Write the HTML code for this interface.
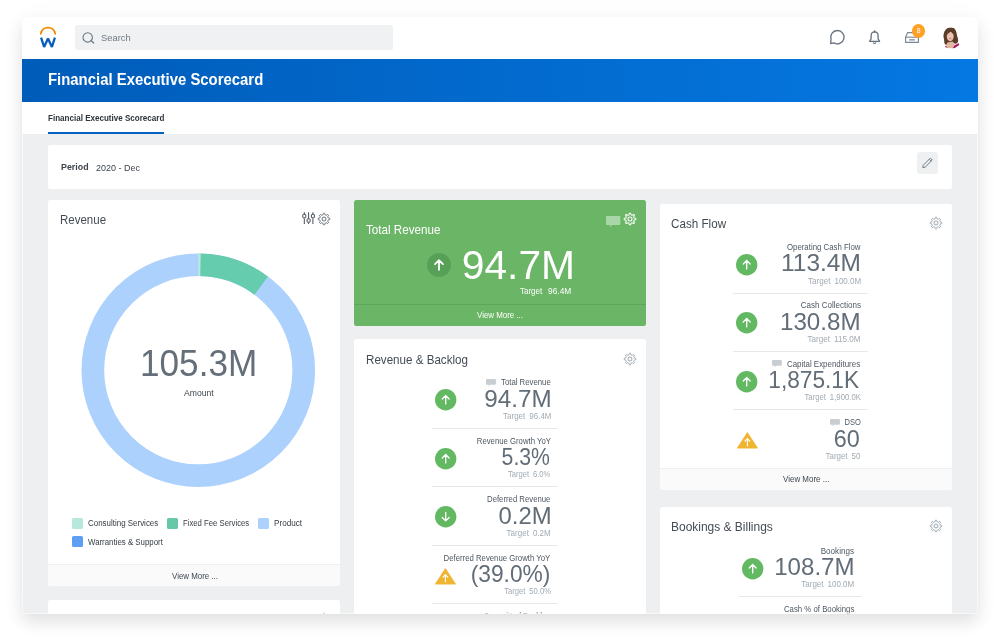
<!DOCTYPE html>
<html lang="en">
<head>
<meta charset="utf-8">
<title>Financial Executive Scorecard</title>
<style>
html,body{margin:0;padding:0;background:#fff;}
body{width:1000px;height:642px;position:relative;overflow:hidden;font-family:"Liberation Sans",sans-serif;}
#shadow{position:absolute;left:22.2px;top:17px;width:955.6px;height:596.7px;border-radius:4px;background:#edeff0;box-shadow:0 8px 16px rgba(0,0,0,.10),0 3px 30px rgba(0,0,0,.035);}
#win{position:absolute;left:22.2px;top:17px;width:955.6px;height:596.7px;border-radius:4px;overflow:hidden;background:#edeff0;}
#page{position:absolute;left:-22.2px;top:-17px;width:1000px;height:642px;will-change:transform;}
.t{position:absolute;margin:0;padding:0;white-space:nowrap;line-height:normal;font-weight:400;display:block;}
.ic{position:absolute;display:block;overflow:visible;}
#topbar{position:absolute;left:0;top:0;width:1000px;height:58.6px;background:#fff;}
#search{position:absolute;left:75.2px;top:24.5px;width:318.2px;height:25.8px;border-radius:2.5px;background:#f0f1f3;}
#search .ic, #search .t{margin-left:-75.2px;margin-top:-24.5px;}
#badge{position:absolute;left:911.8px;top:24px;width:13.6px;height:13.6px;border-radius:50%;background:#ffa126;}
#hero{position:absolute;left:0;top:58.6px;width:1000px;height:43.6px;background:linear-gradient(90deg,#005cb9 2.2%,#0578e2 97.8%);}
#hero .t{margin-top:-58.6px;}
#tabs{position:absolute;left:0;top:102.2px;width:1000px;height:32.2px;background:#fff;}
#tabs .t{margin-top:-102.2px;}
#tabline{position:absolute;left:48px;top:29.4px;width:116px;height:2.9px;background:#0560c2;}
.card{position:absolute;background:#fff;border-radius:2.5px;overflow:hidden;margin:0;}
.card.green{background:#6bb566;}
.foot{position:absolute;left:0;width:100%;background:#fafafa;border-top:1px solid #efefef;box-sizing:border-box;}
.gline{position:absolute;left:0;width:100%;height:1px;background:#5da75b;}
.hr{position:absolute;height:1px;background:#e6e9ec;}
.sw{position:absolute;width:11px;height:10.8px;border-radius:1.6px;display:block;}
#edit{position:absolute;left:917.4px;top:152.4px;width:21px;height:21.2px;border-radius:3px;background:#eff0f2;}
#edit svg{display:block;}
.row{margin:0;}
.in{position:absolute;width:1000px;height:642px;}
#edge{position:absolute;left:0;top:117.4px;width:955.6px;height:479.3px;box-sizing:border-box;border:1px solid rgba(255,255,255,.55);border-top:0;border-radius:0 0 4px 4px;pointer-events:none;}
</style>
</head>
<body>
<div id="shadow"></div>
<div id="win"><div id="page">
<header id="topbar">
<svg class="ic" id="logo" style="left:38px;top:24px" width="20" height="26" viewBox="0 0 20 26"><path d="M2.8 9.7A7.3 7.3 0 0 1 17.2 9.7" fill="none" stroke="#f38b00" stroke-width="1.9" stroke-linecap="round"/><path d="M3.1 13.7L6.1 23L10 14.5L13.9 23L16.9 13.7" fill="none" stroke="#0a5cbc" stroke-width="2.3" stroke-linejoin="bevel"/></svg>
<div id="search">
<svg class="ic" style="left:80.5px;top:30.5px" width="16" height="16" viewBox="0 0 16 16"><circle cx="6.7" cy="6.4" r="4.7" fill="none" stroke="#6b7782" stroke-width="1.1"/><path d="M10.2 9.8L12.7 12" stroke="#6b7782" stroke-width="1.2" stroke-linecap="round"/></svg>
<span class="t" style="font-size:9.5px;top:31.90px;color:#6f7a85;left:100.98px;transform-origin:0 0;transform:scaleX(0.9854);">Search</span>
</div>
<svg class="ic" style="left:828px;top:28.4px" width="18" height="18" viewBox="0 0 18 18"><path d="M5.9 14.9A6.7 6.7 0 1 0 3 11.2L2.7 15.6Z" fill="none" stroke="#66737f" stroke-width="1.35" stroke-linejoin="round"/></svg>
<svg class="ic" style="left:866px;top:28px" width="18" height="18" viewBox="0 0 18 18"><path d="M8.6 3.9C6.2 4 5.1 5.8 5.1 7.8V10.8L3.6 13.3H13.6L12.1 10.8V7.8C12.1 5.8 11 4 8.6 3.9Z" fill="none" stroke="#66737f" stroke-width="1.3" stroke-linejoin="round"/><path d="M7.3 14.4A1.35 1.5 0 0 0 9.9 14.4" fill="none" stroke="#66737f" stroke-width="1.1"/><path d="M8.6 3V3.8" stroke="#66737f" stroke-width="1.5" stroke-linecap="round"/></svg>
<svg class="ic" style="left:903px;top:29px" width="18" height="16" viewBox="0 0 18 16"><path d="M2.6 13.4V8.2L4.6 3.6H13.6L15.4 8.2V13.4Z" fill="none" stroke="#7a8691" stroke-width="1.15" stroke-linejoin="round"/><path d="M2.6 8.2H15.4" stroke="#7a8691" stroke-width="1.1"/><path d="M6.6 10.8H11.4" stroke="#7a8691" stroke-width="1.3" stroke-linecap="round"/></svg>
<div id="badge"></div>
<span class="t" style="font-size:7px;top:27.40px;color:#fff;left:916.64px;transform-origin:1.96px 0;">8</span>
<svg class="ic" id="avatar" style="left:940.4px;top:26.6px" width="22" height="22" viewBox="0 0 22 22"><defs><clipPath id="av"><circle cx="11" cy="11" r="10.6"/></clipPath></defs><g clip-path="url(#av)"><rect width="22" height="22" fill="#fff"/><path d="M5.2 17.6C3.6 15.4 4.6 12.6 3.6 10.4C3 7.4 4.4 3.4 6.8 1.6C9 -0.2 12.6 -0.2 14.6 1.8C16.6 3.8 16.6 7 17.2 9.2C18 11.4 18.6 13.4 17.6 15.6C16.6 17.2 14.6 17 13.6 16L7.6 16.4C7 17.4 6 18 5.2 17.6Z" fill="#5a3c29"/><path d="M7.4 15.4L12.9 14.4L14.6 17.4L12.6 21.6H8.2L5.6 20.2Z" fill="#e3b7a0"/><ellipse cx="10.2" cy="9.2" rx="3.45" ry="5.1" fill="#ecc3ad"/><path d="M6.9 8.6C6.9 5.2 8.4 3.6 10.4 3.6C12.4 3.6 13.7 5 13.8 7.6C12.6 6.6 11.6 5.4 10.6 4.8C9.2 5.6 7.6 6.8 6.9 8.6Z" fill="#5a3c29"/><path d="M8.9 11.6H11.6" stroke="#c9707a" stroke-width="0.7"/><path d="M12.4 22L14.2 18.4L18.6 16.2C19.6 17 20.2 18.4 20.2 19.6L15.6 22Z" fill="#a31b5e"/><path d="M4.6 19.4L6 18.8L8 21.8L6.4 21.4Z" fill="#a31b5e"/></g></svg>
</header>
<div id="hero">
<h1 class="t" style="font-size:16px;top:71.40px;color:#fff;font-weight:700;left:47.73px;transform-origin:0 0;transform:scaleX(0.9310);">Financial Executive Scorecard</h1>
</div>
<nav id="tabs">
<span class="t" style="font-size:9.5px;top:111.60px;color:#2c333a;font-weight:700;left:47.68px;transform-origin:0 0;transform:scaleX(0.8475);">Financial Executive Scorecard</span>
<div id="tabline"></div>
</nav>
<main id="main">
<section class="card" aria-label="Prompt" style="left:48px;top:145.2px;width:903.8px;height:43.6px"><div class="in" style="left:-48px;top:-145.2px">
<span class="t" style="font-size:9.25px;top:162.20px;color:#3c444c;font-weight:700;left:61.02px;transform-origin:0 0;transform:scaleX(0.9577);">Period</span>
<span class="t" style="font-size:9.5px;top:162.00px;color:#3c444c;left:96.35px;transform-origin:0 0;transform:scaleX(0.9444);">2020 - Dec</span>
<div id="edit"><svg width="21" height="21" viewBox="0 0 21 21"><path d="M6.2 13.3L13.4 6.1L15.3 8L8.1 15.2L5.8 15.6ZM12.2 7.3L14.1 9.2" fill="none" stroke="#6f7b86" stroke-width="1" stroke-linejoin="round"/></svg></div>
</div></section>
<section class="card" aria-label="Revenue" style="left:48px;top:199.8px;width:292.2px;height:386px"><div class="foot" style="top:364.4px;height:21.6px"></div><div class="in" style="left:-48px;top:-199.8px">
<h2 class="t" style="font-size:12.75px;top:211.80px;color:#434b54;left:59.68px;transform-origin:0 0;transform:scaleX(0.9027);">Revenue</h2>
<svg class="ic" style="left:301px;top:211px" width="16" height="15" viewBox="0 0 16 15"><g fill="none" stroke="#474e56" stroke-width="1"><path d="M3.3 1.2V3M3.3 7.4V13M7.6 1.2V7.4M7.6 11.6V13M11.9 1.2V3M11.9 7.4V13"/><rect x="1.8" y="3.4" width="3" height="3.4" rx="0.5"/><rect x="6.1" y="7.8" width="3" height="3.4" rx="0.5"/><rect x="10.4" y="3.4" width="3" height="3.4" rx="0.5"/></g></svg>
<svg class="ic" style="left:316.30px;top:210.80px" width="16" height="16" viewBox="0 0 16 16"><path d="M8.00 2.17 L8.38 2.20 L8.73 2.43 L8.92 3.37 L9.10 3.89 L9.35 4.02 L9.61 4.12 L9.86 4.23 L10.13 4.32 L10.62 4.08 L11.42 3.54 L11.83 3.63 L12.12 3.88 L12.37 4.17 L12.46 4.58 L11.92 5.38 L11.68 5.87 L11.77 6.14 L11.88 6.39 L11.98 6.65 L12.11 6.90 L12.63 7.08 L13.57 7.27 L13.80 7.62 L13.83 8.00 L13.80 8.38 L13.57 8.73 L12.63 8.92 L12.11 9.10 L11.98 9.35 L11.88 9.61 L11.77 9.86 L11.68 10.13 L11.92 10.62 L12.46 11.42 L12.37 11.83 L12.12 12.12 L11.83 12.37 L11.42 12.46 L10.62 11.92 L10.13 11.68 L9.86 11.77 L9.61 11.88 L9.35 11.98 L9.10 12.11 L8.92 12.63 L8.73 13.57 L8.38 13.80 L8.00 13.83 L7.62 13.80 L7.27 13.57 L7.08 12.63 L6.90 12.11 L6.65 11.98 L6.39 11.88 L6.14 11.77 L5.87 11.68 L5.38 11.92 L4.58 12.46 L4.17 12.37 L3.88 12.12 L3.63 11.83 L3.54 11.42 L4.08 10.62 L4.32 10.13 L4.23 9.86 L4.12 9.61 L4.02 9.35 L3.89 9.10 L3.37 8.92 L2.43 8.73 L2.20 8.38 L2.17 8.00 L2.20 7.62 L2.43 7.27 L3.37 7.08 L3.89 6.90 L4.02 6.65 L4.12 6.39 L4.23 6.14 L4.32 5.87 L4.08 5.38 L3.54 4.58 L3.63 4.17 L3.88 3.88 L4.17 3.63 L4.58 3.54 L5.38 4.08 L5.87 4.32 L6.14 4.23 L6.39 4.12 L6.65 4.02 L6.90 3.89 L7.08 3.37 L7.27 2.43 L7.62 2.20Z" fill="none" stroke="#555c64" stroke-width="0.9" stroke-linejoin="round"/><circle cx="8" cy="8" r="2.0" fill="none" stroke="#555c64" stroke-width="0.9"/></svg>
<svg class="ic" style="left:0;top:0" width="1000" height="642" viewBox="0 0 1000 642"><circle cx="198.3" cy="370.2" r="105.45" fill="none" stroke="#acd1fd" stroke-width="22.70"/><path d="M198.30 264.75A105.45 105.45 0 0 1 200.69 264.78" fill="none" stroke="#b9ead9" stroke-width="22.70"/><path d="M200.51 264.77A105.45 105.45 0 0 1 261.17 285.54" fill="none" stroke="#65ccad" stroke-width="22.70"/></svg>
<span class="t big" style="font-size:36.25px;top:342.60px;color:#646f7a;left:139.96px;transform-origin:0 0;transform:scaleX(0.9699);">105.3M</span>
<span class="t" style="font-size:8.25px;top:389.30px;color:#3f474f;left:183.60px;transform-origin:0 0;transform:scaleX(1.0430);">Amount</span>
<i class="sw" style="left:71.8px;top:517.8px;background:#b6e9db"></i>
<span class="t" style="font-size:8.5px;top:518.00px;color:#353c44;left:87.90px;transform-origin:0 0;transform:scaleX(0.9353);">Consulting Services</span>
<i class="sw" style="left:167.4px;top:517.8px;background:#65c8a7"></i>
<span class="t" style="font-size:8.5px;top:518.00px;color:#353c44;left:182.98px;transform-origin:0 0;transform:scaleX(0.9097);">Fixed Fee Services</span>
<i class="sw" style="left:258.1px;top:517.8px;background:#acd1fd"></i>
<span class="t" style="font-size:8.5px;top:518.00px;color:#353c44;left:273.65px;transform-origin:0 0;transform:scaleX(0.9594);">Product</span>
<i class="sw" style="left:71.8px;top:536.4px;background:#5f9ff3"></i>
<span class="t" style="font-size:8.5px;top:536.80px;color:#353c44;left:88.26px;transform-origin:0 0;transform:scaleX(0.9253);">Warranties &amp; Support</span>
<span class="t" style="font-size:8.75px;top:570.80px;color:#3f474f;left:171.86px;transform-origin:0 0;transform:scaleX(0.9031);">View More ...</span>
</div></section>
<section class="card" aria-label="" style="left:48px;top:599.6px;width:292.2px;height:60px"><div class="in" style="left:-48px;top:-599.6px">
<svg class="ic" style="left:316.40px;top:610.60px" width="16" height="16" viewBox="0 0 16 16"><path d="M8.00 2.17 L8.38 2.20 L8.73 2.43 L8.92 3.37 L9.10 3.89 L9.35 4.02 L9.61 4.12 L9.86 4.23 L10.13 4.32 L10.62 4.08 L11.42 3.54 L11.83 3.63 L12.12 3.88 L12.37 4.17 L12.46 4.58 L11.92 5.38 L11.68 5.87 L11.77 6.14 L11.88 6.39 L11.98 6.65 L12.11 6.90 L12.63 7.08 L13.57 7.27 L13.80 7.62 L13.83 8.00 L13.80 8.38 L13.57 8.73 L12.63 8.92 L12.11 9.10 L11.98 9.35 L11.88 9.61 L11.77 9.86 L11.68 10.13 L11.92 10.62 L12.46 11.42 L12.37 11.83 L12.12 12.12 L11.83 12.37 L11.42 12.46 L10.62 11.92 L10.13 11.68 L9.86 11.77 L9.61 11.88 L9.35 11.98 L9.10 12.11 L8.92 12.63 L8.73 13.57 L8.38 13.80 L8.00 13.83 L7.62 13.80 L7.27 13.57 L7.08 12.63 L6.90 12.11 L6.65 11.98 L6.39 11.88 L6.14 11.77 L5.87 11.68 L5.38 11.92 L4.58 12.46 L4.17 12.37 L3.88 12.12 L3.63 11.83 L3.54 11.42 L4.08 10.62 L4.32 10.13 L4.23 9.86 L4.12 9.61 L4.02 9.35 L3.89 9.10 L3.37 8.92 L2.43 8.73 L2.20 8.38 L2.17 8.00 L2.20 7.62 L2.43 7.27 L3.37 7.08 L3.89 6.90 L4.02 6.65 L4.12 6.39 L4.23 6.14 L4.32 5.87 L4.08 5.38 L3.54 4.58 L3.63 4.17 L3.88 3.88 L4.17 3.63 L4.58 3.54 L5.38 4.08 L5.87 4.32 L6.14 4.23 L6.39 4.12 L6.65 4.02 L6.90 3.89 L7.08 3.37 L7.27 2.43 L7.62 2.20Z" fill="none" stroke="#8b97a2" stroke-width="0.85" stroke-linejoin="round"/><circle cx="8" cy="8" r="2.0" fill="none" stroke="#8b97a2" stroke-width="0.85"/></svg>
</div></section>
<section class="card green" aria-label="Total Revenue" style="left:354px;top:199.8px;width:291.8px;height:126px"><div class="gline" style="top:103.8px"></div><div class="in" style="left:-354px;top:-199.8px">
<h2 class="t" style="font-size:12.75px;top:221.90px;color:#fff;left:366.37px;transform-origin:0 0;transform:scaleX(0.9139);">Total Revenue</h2>
<svg class="ic" style="left:605.50px;top:216.40px" width="15.4" height="12.1" viewBox="0 0 15.4 12.1"><path d="M1 0H13.4Q14.4 0 14.4 1V8.1Q14.4 9.1 13.4 9.1H6.05L4.03 10.9V9.1H1Q0 9.1 0 8.1V1Q0 0 1 0Z" fill="#a9d6a6"/></svg>
<svg class="ic" style="left:622.30px;top:211.00px" width="16" height="16" viewBox="0 0 16 16"><path d="M8.00 2.17 L8.38 2.20 L8.73 2.43 L8.92 3.37 L9.10 3.89 L9.35 4.02 L9.61 4.12 L9.86 4.23 L10.13 4.32 L10.62 4.08 L11.42 3.54 L11.83 3.63 L12.12 3.88 L12.37 4.17 L12.46 4.58 L11.92 5.38 L11.68 5.87 L11.77 6.14 L11.88 6.39 L11.98 6.65 L12.11 6.90 L12.63 7.08 L13.57 7.27 L13.80 7.62 L13.83 8.00 L13.80 8.38 L13.57 8.73 L12.63 8.92 L12.11 9.10 L11.98 9.35 L11.88 9.61 L11.77 9.86 L11.68 10.13 L11.92 10.62 L12.46 11.42 L12.37 11.83 L12.12 12.12 L11.83 12.37 L11.42 12.46 L10.62 11.92 L10.13 11.68 L9.86 11.77 L9.61 11.88 L9.35 11.98 L9.10 12.11 L8.92 12.63 L8.73 13.57 L8.38 13.80 L8.00 13.83 L7.62 13.80 L7.27 13.57 L7.08 12.63 L6.90 12.11 L6.65 11.98 L6.39 11.88 L6.14 11.77 L5.87 11.68 L5.38 11.92 L4.58 12.46 L4.17 12.37 L3.88 12.12 L3.63 11.83 L3.54 11.42 L4.08 10.62 L4.32 10.13 L4.23 9.86 L4.12 9.61 L4.02 9.35 L3.89 9.10 L3.37 8.92 L2.43 8.73 L2.20 8.38 L2.17 8.00 L2.20 7.62 L2.43 7.27 L3.37 7.08 L3.89 6.90 L4.02 6.65 L4.12 6.39 L4.23 6.14 L4.32 5.87 L4.08 5.38 L3.54 4.58 L3.63 4.17 L3.88 3.88 L4.17 3.63 L4.58 3.54 L5.38 4.08 L5.87 4.32 L6.14 4.23 L6.39 4.12 L6.65 4.02 L6.90 3.89 L7.08 3.37 L7.27 2.43 L7.62 2.20Z" fill="none" stroke="#fff" stroke-width="1.05" stroke-linejoin="round"/><circle cx="8" cy="8" r="2.0" fill="none" stroke="#fff" stroke-width="1.05"/></svg>
<svg class="ic" style="left:427.00px;top:253.30px" width="24" height="24" viewBox="0 0 24 24"><circle cx="12" cy="12" r="12" fill="#58a057"/><path d="M12 16.8V7.5M8.06 11.14L12 7.2L15.94 11.14" fill="none" stroke="#fff" stroke-width="1.8" stroke-linecap="round" stroke-linejoin="round"/></svg>
<span class="t big" style="font-size:40.75px;top:242.10px;color:#fff;left:461.77px;transform-origin:0 0;">94.7M</span>
<span class="t" style="font-size:8.5px;top:285.60px;color:#fff;left:520.34px;transform-origin:0 0;transform:scaleX(0.9412);">Target</span>
<span class="t" style="font-size:8.5px;top:285.60px;color:#fff;left:547.82px;transform-origin:0 0;transform:scaleX(0.9856);">96.4M</span>
<span class="t" style="font-size:8.75px;top:310.40px;color:#fff;left:477.36px;transform-origin:0 0;transform:scaleX(0.9031);">View More ...</span>
</div></section>
<section class="card" aria-label="Revenue &amp; Backlog" style="left:354px;top:339.3px;width:291.8px;height:300px"><div class="in" style="left:-354px;top:-339.3px">
<h2 class="t" style="font-size:12.75px;top:351.60px;color:#434b54;left:365.67px;transform-origin:0 0;transform:scaleX(0.9101);">Revenue &amp; Backlog</h2>
<svg class="ic" style="left:622.20px;top:350.50px" width="16" height="16" viewBox="0 0 16 16"><path d="M8.00 2.17 L8.38 2.20 L8.73 2.43 L8.92 3.37 L9.10 3.89 L9.35 4.02 L9.61 4.12 L9.86 4.23 L10.13 4.32 L10.62 4.08 L11.42 3.54 L11.83 3.63 L12.12 3.88 L12.37 4.17 L12.46 4.58 L11.92 5.38 L11.68 5.87 L11.77 6.14 L11.88 6.39 L11.98 6.65 L12.11 6.90 L12.63 7.08 L13.57 7.27 L13.80 7.62 L13.83 8.00 L13.80 8.38 L13.57 8.73 L12.63 8.92 L12.11 9.10 L11.98 9.35 L11.88 9.61 L11.77 9.86 L11.68 10.13 L11.92 10.62 L12.46 11.42 L12.37 11.83 L12.12 12.12 L11.83 12.37 L11.42 12.46 L10.62 11.92 L10.13 11.68 L9.86 11.77 L9.61 11.88 L9.35 11.98 L9.10 12.11 L8.92 12.63 L8.73 13.57 L8.38 13.80 L8.00 13.83 L7.62 13.80 L7.27 13.57 L7.08 12.63 L6.90 12.11 L6.65 11.98 L6.39 11.88 L6.14 11.77 L5.87 11.68 L5.38 11.92 L4.58 12.46 L4.17 12.37 L3.88 12.12 L3.63 11.83 L3.54 11.42 L4.08 10.62 L4.32 10.13 L4.23 9.86 L4.12 9.61 L4.02 9.35 L3.89 9.10 L3.37 8.92 L2.43 8.73 L2.20 8.38 L2.17 8.00 L2.20 7.62 L2.43 7.27 L3.37 7.08 L3.89 6.90 L4.02 6.65 L4.12 6.39 L4.23 6.14 L4.32 5.87 L4.08 5.38 L3.54 4.58 L3.63 4.17 L3.88 3.88 L4.17 3.63 L4.58 3.54 L5.38 4.08 L5.87 4.32 L6.14 4.23 L6.39 4.12 L6.65 4.02 L6.90 3.89 L7.08 3.37 L7.27 2.43 L7.62 2.20Z" fill="none" stroke="#8b97a2" stroke-width="0.85" stroke-linejoin="round"/><circle cx="8" cy="8" r="2.0" fill="none" stroke="#8b97a2" stroke-width="0.85"/></svg>
<div class="row">
<svg class="ic" style="left:434.60px;top:389.40px" width="21.4" height="21.4" viewBox="0 0 21.4 21.4"><circle cx="10.7" cy="10.7" r="10.7" fill="#63b962"/><path d="M10.7 14.899999999999999V6.799999999999999M7.26 9.94L10.7 6.499999999999999L14.14 9.94" fill="none" stroke="#fff" stroke-width="1.35" stroke-linecap="round" stroke-linejoin="round"/></svg>
<svg class="ic" style="left:485.80px;top:378.90px" width="10.9" height="8.8" viewBox="0 0 10.9 8.8"><path d="M1 0H8.9Q9.9 0 9.9 1V4.8Q9.9 5.8 8.9 5.8H4.16L2.77 7.6V5.8H1Q0 5.8 0 4.8V1Q0 0 1 0Z" fill="#c9ced3"/></svg>
<span class="t lab" style="font-size:8.25px;top:378.20px;color:#4f5862;right:449.23px;transform-origin:100% 0;transform:scaleX(0.9429);">Total Revenue</span>
<span class="t val" style="font-size:23.25px;top:385.80px;color:#626d78;right:448.76px;transform-origin:100% 0;transform:scaleX(1.0420);">94.7M</span>
<span class="t tgt" style="font-size:8.5px;top:411.00px;color:#a1abb4;right:448.93px;transform-origin:100% 0;transform:scaleX(0.9404);">Target 96.4M</span>
<div class="hr" style="left:431.6px;width:126.8px;top:428.0px"></div>
</div>
<div class="row">
<svg class="ic" style="left:434.60px;top:447.85px" width="21.4" height="21.4" viewBox="0 0 21.4 21.4"><circle cx="10.7" cy="10.7" r="10.7" fill="#63b962"/><path d="M10.7 14.899999999999999V6.799999999999999M7.26 9.94L10.7 6.499999999999999L14.14 9.94" fill="none" stroke="#fff" stroke-width="1.35" stroke-linecap="round" stroke-linejoin="round"/></svg>
<span class="t lab" style="font-size:8.25px;top:436.65px;color:#4f5862;right:449.43px;transform-origin:100% 0;transform:scaleX(0.9392);">Revenue Growth YoY</span>
<span class="t val" style="font-size:23.25px;top:444.25px;color:#626d78;right:450.07px;transform-origin:100% 0;transform:scaleX(0.9129);">5.3%</span>
<span class="t tgt" style="font-size:8.5px;top:469.45px;color:#a1abb4;right:449.34px;transform-origin:100% 0;transform:scaleX(0.8954);">Target 6.0%</span>
<div class="hr" style="left:431.6px;width:126.8px;top:486.4px"></div>
</div>
<div class="row">
<svg class="ic" style="left:434.60px;top:506.30px" width="21.4" height="21.4" viewBox="0 0 21.4 21.4"><circle cx="10.7" cy="10.7" r="10.7" fill="#63b962"/><path transform="rotate(180 10.7 10.7)" d="M10.7 14.899999999999999V6.799999999999999M7.26 9.94L10.7 6.499999999999999L14.14 9.94" fill="none" stroke="#fff" stroke-width="1.35" stroke-linecap="round" stroke-linejoin="round"/></svg>
<span class="t lab" style="font-size:8.25px;top:495.10px;color:#4f5862;right:449.24px;transform-origin:100% 0;transform:scaleX(0.9402);">Deferred Revenue</span>
<span class="t val" style="font-size:23.25px;top:502.70px;color:#626d78;right:448.81px;transform-origin:100% 0;transform:scaleX(1.0282);">0.2M</span>
<span class="t tgt" style="font-size:8.5px;top:527.90px;color:#a1abb4;right:448.94px;transform-origin:100% 0;transform:scaleX(0.9455);">Target 0.2M</span>
<div class="hr" style="left:431.6px;width:126.8px;top:544.9px"></div>
</div>
<div class="row">
<svg class="ic" style="left:435.20px;top:567.55px" width="20.80" height="16.10" viewBox="0 0 20.80 16.10"><path d="M10.4 0.6L20.50 16.10H0.3Z" fill="#f1b431" stroke="#f1b431" stroke-width="0.8" stroke-linejoin="round"/><path d="M10.4 13.85V6.76M8.00 9.16L10.4 6.76L12.80 9.16" fill="none" stroke="#fff" stroke-width="1.1" stroke-linecap="round" stroke-linejoin="round"/></svg>
<span class="t lab" style="font-size:8.25px;top:553.55px;color:#4f5862;right:449.44px;transform-origin:100% 0;transform:scaleX(0.9418);">Deferred Revenue Growth YoY</span>
<span class="t val" style="font-size:23.25px;top:561.15px;color:#626d78;right:449.40px;transform-origin:100% 0;transform:scaleX(0.9798);">(39.0%)</span>
<span class="t tgt" style="font-size:8.5px;top:586.35px;color:#a1abb4;right:449.33px;transform-origin:100% 0;transform:scaleX(0.9008);">Target 50.0%</span>
<div class="hr" style="left:431.6px;width:126.8px;top:603.3px"></div>
</div>
<div class="row">
<svg class="ic" style="left:434.60px;top:623.20px" width="21.4" height="21.4" viewBox="0 0 21.4 21.4"><circle cx="10.7" cy="10.7" r="10.7" fill="#63b962"/><path d="M10.7 14.899999999999999V6.799999999999999M7.26 9.94L10.7 6.499999999999999L14.14 9.94" fill="none" stroke="#fff" stroke-width="1.35" stroke-linecap="round" stroke-linejoin="round"/></svg>
<span class="t lab" style="font-size:8.25px;top:612.00px;color:#4f5862;right:449.10px;transform-origin:100% 0;transform:scaleX(0.9351);">Committed Backlog</span>
<span class="t val" style="font-size:23.25px;top:619.60px;color:#626d78;right:448.74px;transform-origin:100% 0;transform:scaleX(1.0506);">12.4M</span>
<span class="t tgt" style="font-size:8.5px;top:644.80px;color:#a1abb4;right:448.93px;transform-origin:100% 0;transform:scaleX(0.9404);">Target 12.0M</span>
</div>
</div></section>
<section class="card" aria-label="Cash Flow" style="left:659.6px;top:203.8px;width:292.2px;height:286px"><div class="foot" style="top:264.2px;height:21.8px"></div><div class="in" style="left:-659.6px;top:-203.8px">
<h2 class="t" style="font-size:12.75px;top:215.90px;color:#434b54;left:671.32px;transform-origin:0 0;transform:scaleX(0.9143);">Cash Flow</h2>
<svg class="ic" style="left:927.90px;top:214.80px" width="16" height="16" viewBox="0 0 16 16"><path d="M8.00 2.17 L8.38 2.20 L8.73 2.43 L8.92 3.37 L9.10 3.89 L9.35 4.02 L9.61 4.12 L9.86 4.23 L10.13 4.32 L10.62 4.08 L11.42 3.54 L11.83 3.63 L12.12 3.88 L12.37 4.17 L12.46 4.58 L11.92 5.38 L11.68 5.87 L11.77 6.14 L11.88 6.39 L11.98 6.65 L12.11 6.90 L12.63 7.08 L13.57 7.27 L13.80 7.62 L13.83 8.00 L13.80 8.38 L13.57 8.73 L12.63 8.92 L12.11 9.10 L11.98 9.35 L11.88 9.61 L11.77 9.86 L11.68 10.13 L11.92 10.62 L12.46 11.42 L12.37 11.83 L12.12 12.12 L11.83 12.37 L11.42 12.46 L10.62 11.92 L10.13 11.68 L9.86 11.77 L9.61 11.88 L9.35 11.98 L9.10 12.11 L8.92 12.63 L8.73 13.57 L8.38 13.80 L8.00 13.83 L7.62 13.80 L7.27 13.57 L7.08 12.63 L6.90 12.11 L6.65 11.98 L6.39 11.88 L6.14 11.77 L5.87 11.68 L5.38 11.92 L4.58 12.46 L4.17 12.37 L3.88 12.12 L3.63 11.83 L3.54 11.42 L4.08 10.62 L4.32 10.13 L4.23 9.86 L4.12 9.61 L4.02 9.35 L3.89 9.10 L3.37 8.92 L2.43 8.73 L2.20 8.38 L2.17 8.00 L2.20 7.62 L2.43 7.27 L3.37 7.08 L3.89 6.90 L4.02 6.65 L4.12 6.39 L4.23 6.14 L4.32 5.87 L4.08 5.38 L3.54 4.58 L3.63 4.17 L3.88 3.88 L4.17 3.63 L4.58 3.54 L5.38 4.08 L5.87 4.32 L6.14 4.23 L6.39 4.12 L6.65 4.02 L6.90 3.89 L7.08 3.37 L7.27 2.43 L7.62 2.20Z" fill="none" stroke="#8b97a2" stroke-width="0.85" stroke-linejoin="round"/><circle cx="8" cy="8" r="2.0" fill="none" stroke="#8b97a2" stroke-width="0.85"/></svg>
<div class="row">
<svg class="ic" style="left:736.30px;top:253.90px" width="21.4" height="21.4" viewBox="0 0 21.4 21.4"><circle cx="10.7" cy="10.7" r="10.7" fill="#63b962"/><path d="M10.7 14.899999999999999V6.799999999999999M7.26 9.94L10.7 6.499999999999999L14.14 9.94" fill="none" stroke="#fff" stroke-width="1.35" stroke-linecap="round" stroke-linejoin="round"/></svg>
<span class="t lab" style="font-size:8.25px;top:242.70px;color:#4f5862;right:139.71px;transform-origin:100% 0;transform:scaleX(0.9490);">Operating Cash Flow</span>
<span class="t val" style="font-size:23.25px;top:250.30px;color:#626d78;right:138.91px;transform-origin:100% 0;transform:scaleX(1.0528);">113.4M</span>
<span class="t tgt" style="font-size:8.5px;top:275.50px;color:#a1abb4;right:139.02px;transform-origin:100% 0;transform:scaleX(0.9452);">Target 100.0M</span>
<div class="hr" style="left:733.1px;width:135.1px;top:292.5px"></div>
</div>
<div class="row">
<svg class="ic" style="left:736.30px;top:312.35px" width="21.4" height="21.4" viewBox="0 0 21.4 21.4"><circle cx="10.7" cy="10.7" r="10.7" fill="#63b962"/><path d="M10.7 14.899999999999999V6.799999999999999M7.26 9.94L10.7 6.499999999999999L14.14 9.94" fill="none" stroke="#fff" stroke-width="1.35" stroke-linecap="round" stroke-linejoin="round"/></svg>
<span class="t lab" style="font-size:8.25px;top:301.15px;color:#4f5862;right:139.43px;transform-origin:100% 0;transform:scaleX(0.9720);">Cash Collections</span>
<span class="t val" style="font-size:23.25px;top:308.75px;color:#626d78;right:138.96px;transform-origin:100% 0;transform:scaleX(1.0388);">130.8M</span>
<span class="t tgt" style="font-size:8.5px;top:333.95px;color:#a1abb4;right:139.05px;transform-origin:100% 0;transform:scaleX(0.9554);">Target 115.0M</span>
<div class="hr" style="left:733.1px;width:135.1px;top:350.9px"></div>
</div>
<div class="row">
<svg class="ic" style="left:736.30px;top:370.80px" width="21.4" height="21.4" viewBox="0 0 21.4 21.4"><circle cx="10.7" cy="10.7" r="10.7" fill="#63b962"/><path d="M10.7 14.899999999999999V6.799999999999999M7.26 9.94L10.7 6.499999999999999L14.14 9.94" fill="none" stroke="#fff" stroke-width="1.35" stroke-linecap="round" stroke-linejoin="round"/></svg>
<svg class="ic" style="left:772.40px;top:360.30px" width="10.9" height="8.8" viewBox="0 0 10.9 8.8"><path d="M1 0H8.9Q9.9 0 9.9 1V4.8Q9.9 5.8 8.9 5.8H4.16L2.77 7.6V5.8H1Q0 5.8 0 4.8V1Q0 0 1 0Z" fill="#c9ced3"/></svg>
<span class="t lab" style="font-size:8.25px;top:359.60px;color:#4f5862;right:139.44px;transform-origin:100% 0;transform:scaleX(0.9609);">Capital Expenditures</span>
<span class="t val" style="font-size:23.25px;top:367.20px;color:#626d78;right:140.60px;transform-origin:100% 0;transform:scaleX(0.9756);">1,875.1K</span>
<span class="t tgt" style="font-size:8.5px;top:392.40px;color:#a1abb4;right:139.60px;transform-origin:100% 0;transform:scaleX(0.9120);">Target 1,900.0K</span>
<div class="hr" style="left:733.1px;width:135.1px;top:409.4px"></div>
</div>
<div class="row">
<svg class="ic" style="left:736.90px;top:432.05px" width="20.80" height="16.10" viewBox="0 0 20.80 16.10"><path d="M10.4 0.6L20.50 16.10H0.3Z" fill="#f1b431" stroke="#f1b431" stroke-width="0.8" stroke-linejoin="round"/><path d="M10.4 13.85V6.76M8.00 9.16L10.4 6.76L12.80 9.16" fill="none" stroke="#fff" stroke-width="1.1" stroke-linecap="round" stroke-linejoin="round"/></svg>
<svg class="ic" style="left:829.50px;top:418.75px" width="10.9" height="8.8" viewBox="0 0 10.9 8.8"><path d="M1 0H8.9Q9.9 0 9.9 1V4.8Q9.9 5.8 8.9 5.8H4.16L2.77 7.6V5.8H1Q0 5.8 0 4.8V1Q0 0 1 0Z" fill="#c9ced3"/></svg>
<span class="t lab" style="font-size:8.25px;top:418.05px;color:#4f5862;right:139.35px;transform-origin:100% 0;transform:scaleX(0.9150);">DSO</span>
<span class="t val" style="font-size:23.25px;top:425.65px;color:#626d78;right:140.03px;transform-origin:100% 0;transform:scaleX(1.0071);">60</span>
<span class="t tgt" style="font-size:8.5px;top:450.85px;color:#a1abb4;right:139.41px;transform-origin:100% 0;transform:scaleX(0.9309);">Target 50</span>
</div>
<span class="t" style="font-size:8.75px;top:474.30px;color:#3f474f;left:782.76px;transform-origin:0 0;transform:scaleX(0.9111);">View More ...</span>
</div></section>
<section class="card" aria-label="Bookings &amp; Billings" style="left:659.6px;top:507.4px;width:292.2px;height:160px"><div class="in" style="left:-659.6px;top:-507.4px">
<h2 class="t" style="font-size:12.75px;top:519.40px;color:#434b54;left:670.94px;transform-origin:0 0;transform:scaleX(0.9386);">Bookings &amp; Billings</h2>
<svg class="ic" style="left:927.80px;top:518.40px" width="16" height="16" viewBox="0 0 16 16"><path d="M8.00 2.17 L8.38 2.20 L8.73 2.43 L8.92 3.37 L9.10 3.89 L9.35 4.02 L9.61 4.12 L9.86 4.23 L10.13 4.32 L10.62 4.08 L11.42 3.54 L11.83 3.63 L12.12 3.88 L12.37 4.17 L12.46 4.58 L11.92 5.38 L11.68 5.87 L11.77 6.14 L11.88 6.39 L11.98 6.65 L12.11 6.90 L12.63 7.08 L13.57 7.27 L13.80 7.62 L13.83 8.00 L13.80 8.38 L13.57 8.73 L12.63 8.92 L12.11 9.10 L11.98 9.35 L11.88 9.61 L11.77 9.86 L11.68 10.13 L11.92 10.62 L12.46 11.42 L12.37 11.83 L12.12 12.12 L11.83 12.37 L11.42 12.46 L10.62 11.92 L10.13 11.68 L9.86 11.77 L9.61 11.88 L9.35 11.98 L9.10 12.11 L8.92 12.63 L8.73 13.57 L8.38 13.80 L8.00 13.83 L7.62 13.80 L7.27 13.57 L7.08 12.63 L6.90 12.11 L6.65 11.98 L6.39 11.88 L6.14 11.77 L5.87 11.68 L5.38 11.92 L4.58 12.46 L4.17 12.37 L3.88 12.12 L3.63 11.83 L3.54 11.42 L4.08 10.62 L4.32 10.13 L4.23 9.86 L4.12 9.61 L4.02 9.35 L3.89 9.10 L3.37 8.92 L2.43 8.73 L2.20 8.38 L2.17 8.00 L2.20 7.62 L2.43 7.27 L3.37 7.08 L3.89 6.90 L4.02 6.65 L4.12 6.39 L4.23 6.14 L4.32 5.87 L4.08 5.38 L3.54 4.58 L3.63 4.17 L3.88 3.88 L4.17 3.63 L4.58 3.54 L5.38 4.08 L5.87 4.32 L6.14 4.23 L6.39 4.12 L6.65 4.02 L6.90 3.89 L7.08 3.37 L7.27 2.43 L7.62 2.20Z" fill="none" stroke="#8b97a2" stroke-width="0.85" stroke-linejoin="round"/><circle cx="8" cy="8" r="2.0" fill="none" stroke="#8b97a2" stroke-width="0.85"/></svg>
<div class="row">
<svg class="ic" style="left:742.10px;top:557.70px" width="21.4" height="21.4" viewBox="0 0 21.4 21.4"><circle cx="10.7" cy="10.7" r="10.7" fill="#63b962"/><path d="M10.7 14.899999999999999V6.799999999999999M7.26 9.94L10.7 6.499999999999999L14.14 9.94" fill="none" stroke="#fff" stroke-width="1.35" stroke-linecap="round" stroke-linejoin="round"/></svg>
<span class="t lab" style="font-size:8.25px;top:546.50px;color:#4f5862;right:145.73px;transform-origin:100% 0;transform:scaleX(0.9788);">Bookings</span>
<span class="t val" style="font-size:23.25px;top:554.10px;color:#626d78;right:145.26px;transform-origin:100% 0;transform:scaleX(1.0360);">108.7M</span>
<span class="t tgt" style="font-size:8.5px;top:579.30px;color:#a1abb4;right:145.32px;transform-origin:100% 0;transform:scaleX(0.9415);">Target 100.0M</span>
<div class="hr" style="left:739.1px;width:122.9px;top:596.3px"></div>
</div>
<div class="row">
<svg class="ic" style="left:742.10px;top:616.15px" width="21.4" height="21.4" viewBox="0 0 21.4 21.4"><circle cx="10.7" cy="10.7" r="10.7" fill="#63b962"/><path d="M10.7 14.899999999999999V6.799999999999999M7.26 9.94L10.7 6.499999999999999L14.14 9.94" fill="none" stroke="#fff" stroke-width="1.35" stroke-linecap="round" stroke-linejoin="round"/></svg>
<span class="t lab" style="font-size:8.25px;top:604.95px;color:#4f5862;right:145.73px;transform-origin:100% 0;transform:scaleX(0.9471);">Cash % of Bookings</span>
<span class="t val" style="font-size:23.25px;top:612.55px;color:#626d78;right:146.30px;transform-origin:100% 0;transform:scaleX(1.0928);">96.2%</span>
<span class="t tgt" style="font-size:8.5px;top:637.75px;color:#a1abb4;right:145.73px;transform-origin:100% 0;transform:scaleX(0.9008);">Target 95.0%</span>
</div>
</div></section>
</main>
</div><div id="edge"></div></div>
</body>
</html>
